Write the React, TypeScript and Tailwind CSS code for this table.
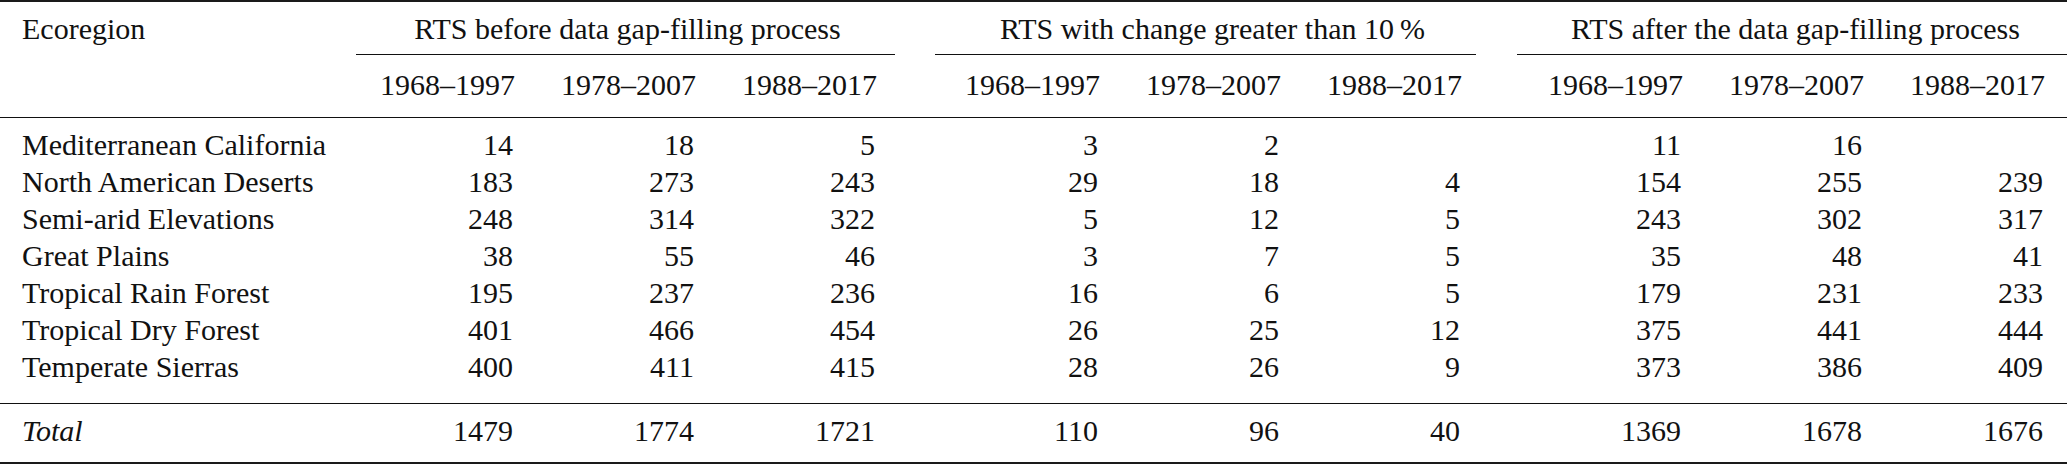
import React from "react";

const COLS =
  "grid grid-cols-[356px_repeat(3,181px)_42px_repeat(3,181px)_40px_repeat(3,181px)]";

const rows: [string, (string | number)[]][] = [
  ["Mediterranean California", [14, 18, 5, 3, 2, "", 11, 16, ""]],
  ["North American Deserts", [183, 273, 243, 29, 18, 4, 154, 255, 239]],
  ["Semi-arid Elevations", [248, 314, 322, 5, 12, 5, 243, 302, 317]],
  ["Great Plains", [38, 55, 46, 3, 7, 5, 35, 48, 41]],
  ["Tropical Rain Forest", [195, 237, 236, 16, 6, 5, 179, 231, 233]],
  ["Tropical Dry Forest", [401, 466, 454, 26, 25, 12, 375, 441, 444]],
  ["Temperate Sierras", [400, 411, 415, 28, 26, 9, 373, 386, 409]],
];

const total = [1479, 1774, 1721, 110, 96, 40, 1369, 1678, 1676];

function NumCells({ vals }: { vals: (string | number)[] }) {
  const out: React.ReactNode[] = [];
  vals.forEach((v, i) => {
    if (i === 3 || i === 6) out.push(<div key={"s" + i} />);
    out.push(
      <div key={i} className="px-[24px] text-right">
        {v}
      </div>
    );
  });
  return <>{out}</>;
}

const years = ["1968–1997", "1978–2007", "1988–2017"];

export default function App() {
  return (
    <div className="w-[2067px] h-[464px] bg-white text-[#111] font-['Liberation_Serif','DejaVu_Serif','Noto_Serif','Times_New_Roman',Times,serif] text-[30px] leading-[37px] overflow-hidden">
      <div className="h-[2px] bg-[#1a1a1a]" />
      <div className={COLS + " pt-[8px]"}>
        <div className="pl-[22px]">Ecoregion</div>
        <div className="col-span-3 text-center">RTS before data gap-filling process</div>
        <div />
        <div className="col-span-3 text-center">RTS with change greater than 10&#8201;%</div>
        <div />
        <div className="col-span-3 text-center">RTS after the data gap-filling process</div>
      </div>
      <div className={COLS + " mt-[7px] h-px"}>
        <div />
        <div className="col-span-3 h-px bg-[#111] mr-[4px]" />
        <div />
        <div className="col-span-3 h-px bg-[#111] ml-[-6px] mr-[8px]" />
        <div />
        <div className="col-span-3 h-px bg-[#111] ml-[-7px]" />
      </div>
      <div className={COLS + " mt-[11px]"}>
        <div />
        {[0, 1, 2].map((g) => (
          <React.Fragment key={g}>
            {g > 0 && <div />}
            {years.map((y) => (
              <div key={y} className="px-[24px] text-center whitespace-nowrap">
                {y}
              </div>
            ))}
          </React.Fragment>
        ))}
      </div>
      <div className="mt-[14px] h-px bg-[#111]" />
      <div className="pt-[8px]">
        {rows.map(([name, vals]) => (
          <div key={name} className={COLS}>
            <div className="pl-[22px] whitespace-nowrap">{name}</div>
            <NumCells vals={vals} />
          </div>
        ))}
      </div>
      <div className="mt-[18px] h-px bg-[#111]" />
      <div className={COLS + " mt-[8px]"}>
        <div className="pl-[22px] italic">Total</div>
        <NumCells vals={total} />
      </div>
      <div className="mt-[13px] h-[2px] bg-[#1a1a1a]" />
    </div>
  );
}
